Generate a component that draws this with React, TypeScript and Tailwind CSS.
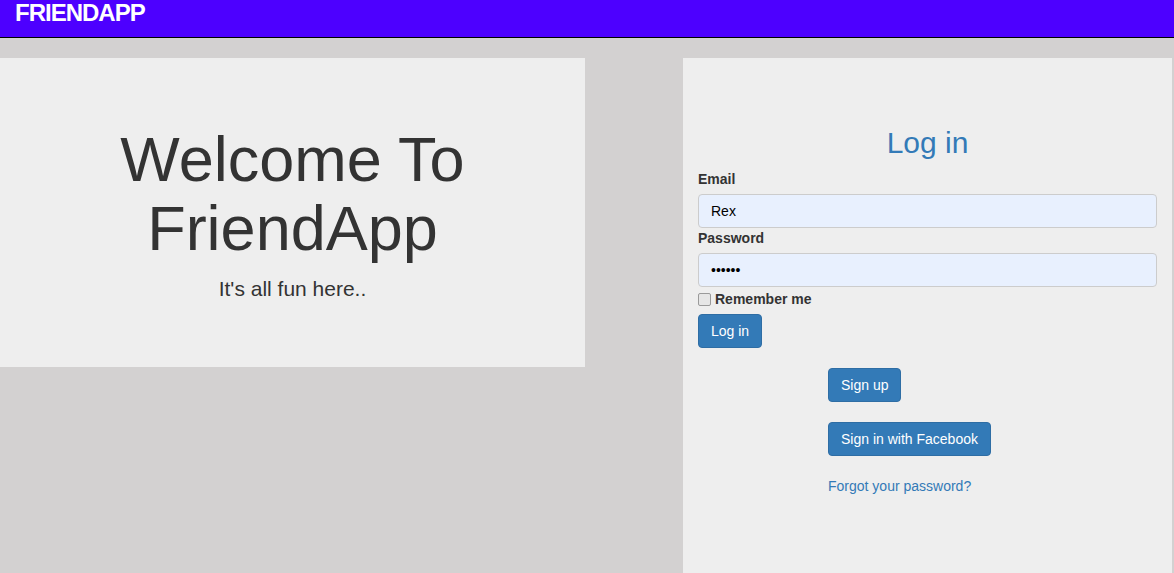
import React from "react";

export default function App() {
  const font = { fontFamily: '"Liberation Sans", Arial, Helvetica, sans-serif' };
  return (
    <div style={font} className="min-h-[573px] bg-[#d3d1d1] text-[14px] leading-[20px] text-[#333]">
      <header className="h-[38px] bg-[#4d00ff] border-b border-black px-[15px]">
        <div className="text-[24px] leading-[26px] font-bold text-white tracking-[-1px]">FRIENDAPP</div>
      </header>
      <div className="flex items-start pt-[20px]">
        <div className="w-[585px] shrink-0 bg-[#eeeeee] pt-[47px] pb-[48px] text-center">
          <h1 className="mt-5 mb-[10px] text-[63px] leading-[1.1] text-[#333]">
            Welcome To
            <br />
            FriendApp
          </h1>
          <p className="mb-[15px] text-[21px] leading-[30px] font-normal">It's all fun here..</p>
        </div>
        <div className="w-[98px] shrink-0" />
        <div className="w-[489px] shrink-0 min-h-[515px] bg-[#eeeeee] px-[15px] pt-[48px]">
          <h2 className="mt-5 mb-[10px] text-[30px] leading-[33px] text-[#337ab7] text-center">Log in</h2>
          <label className="block font-bold mb-[5px]">Email</label>
          <div className="h-[34px] rounded-[4px] border border-[#ccc] bg-[#e8f0fe] px-[12px] flex items-center text-black text-[14px]">
            Rex
          </div>
          <label className="block font-bold mb-[5px] mt-0">Password</label>
          <div className="h-[34px] rounded-[4px] border border-[#ccc] bg-[#e8f0fe] px-[12px] flex items-center text-black text-[14px]">
            ••••••
          </div>
          <div className="flex items-center mt-[2px] h-[20px]">
            <span className="w-[13px] h-[13px] rounded-[2px] border border-[#9a9a9a] bg-[#e6e6e6] mr-[4px]" />
            <span className="font-bold">Remember me</span>
          </div>
          <div className="mt-[5px]">
            <button className="h-[34px] px-[12px] rounded-[4px] bg-[#337ab7] border border-[#2e6da4] text-white text-[14px]">
              Log in
            </button>
          </div>
          <div className="ml-[130px] mt-[20px] flex flex-col items-start">
            <button className="h-[34px] px-[12px] rounded-[4px] bg-[#337ab7] border border-[#2e6da4] text-white text-[14px]">
              Sign up
            </button>
            <button className="mt-[20px] h-[34px] px-[12px] rounded-[4px] bg-[#337ab7] border border-[#2e6da4] text-white text-[14px]">
              Sign in with Facebook
            </button>
            <a className="mt-[20px] text-[#337ab7] text-[14px] leading-[20px]">Forgot your password?</a>
          </div>
        </div>
      </div>
    </div>
  );
}
